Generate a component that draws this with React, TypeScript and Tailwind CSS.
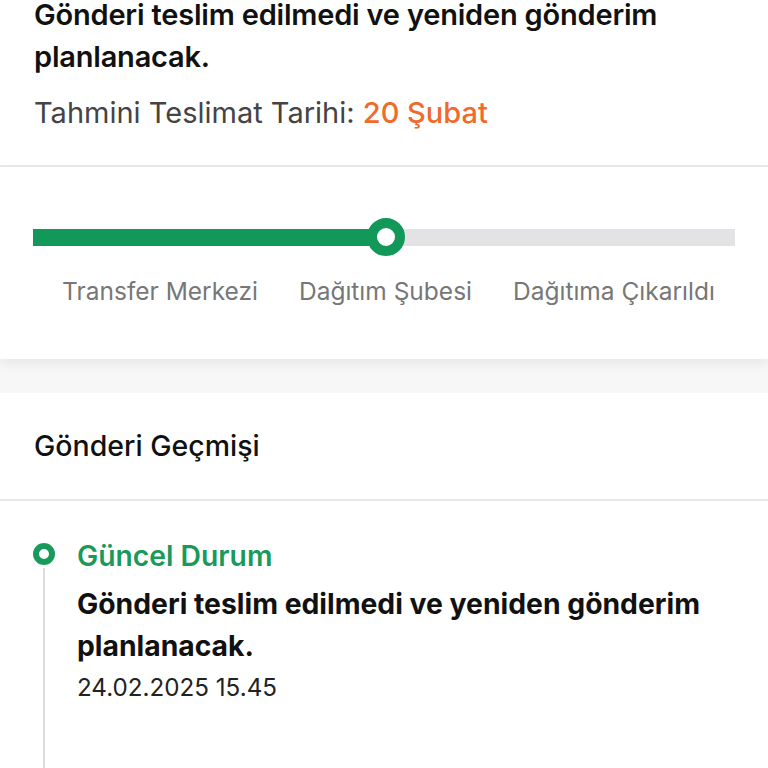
export default function App() {
  const steps = ["Transfer Merkezi", "Dağıtım Şubesi", "Dağıtıma Çıkarıldı"];

  return (
    <div className="w-[768px] h-[768px] overflow-hidden bg-white font-['Inter','Noto_Sans',sans-serif]">
      {/* Özet */}
      <div className="px-[34px] pb-[36px] -mt-[6px] border-b-2 border-[#e8e8e8]">
        <h1 className="text-[29px] leading-[42px] font-semibold text-[#111] tracking-[-0.2px]">
          Gönderi teslim edilmedi ve yeniden gönderim planlanacak.
        </h1>
        <p className="mt-[19px] text-[29px] leading-[32px] text-[#444]">
          Tahmini Teslimat Tarihi: <span className="font-medium text-[#f06a2a]">20 Şubat</span>
        </p>
      </div>

      {/* İlerleme */}
      <div className="relative z-10 bg-white px-[33px] pt-[51px] pb-[53px] shadow-[0_6px_10px_rgba(0,0,0,0.06)]">
        <div className="relative h-[38px] flex items-center">
          <div className="h-[17px] w-full bg-[#e3e3e5] flex">
            <div className="h-full w-[340px] bg-[#12995a]"></div>
          </div>
          <div className="absolute left-[334px] top-0 w-[38px] h-[38px] rounded-full border-[10px] border-[#12995a] bg-white"></div>
        </div>
        <div className="mt-[20px] flex justify-center gap-[41px] pl-[9px] text-[24.5px] leading-[30px] text-[#777]">
          {steps.map((s) => (
            <span key={s}>{s}</span>
          ))}
        </div>
      </div>

      <div className="h-[34px] bg-[#f7f7f7]"></div>

      {/* Geçmiş */}
      <div className="bg-white">
        <div className="px-[34px] py-[35px] border-b-2 border-[#e8e8e8]">
          <h2 className="text-[28.5px] leading-[36px] font-medium text-[#111]">Gönderi Geçmişi</h2>
        </div>
        <div className="flex px-[33px] pt-[42px]">
          <div className="flex flex-col items-center w-[22px] mr-[22px]">
            <div className="w-[22px] h-[22px] rounded-full border-[6px] border-[#1a9a5a] bg-white"></div>
            <div className="w-[2px] h-[200px] mt-[3px] bg-[#dcdcdc]"></div>
          </div>
          <div className="-mt-[3px]">
            <div className="text-[28.3px] leading-[32px] font-semibold text-[#1a9a5a]">Güncel Durum</div>
            <div className="mt-[11px] text-[28.3px] leading-[42px] font-bold text-[#111]">
              Gönderi teslim edilmedi ve yeniden gönderim planlanacak.
            </div>
            <div className="mt-[6px] text-[24.2px] leading-[30px] text-[#222]">24.02.2025 15.45</div>
          </div>
        </div>
      </div>
    </div>
  );
}
